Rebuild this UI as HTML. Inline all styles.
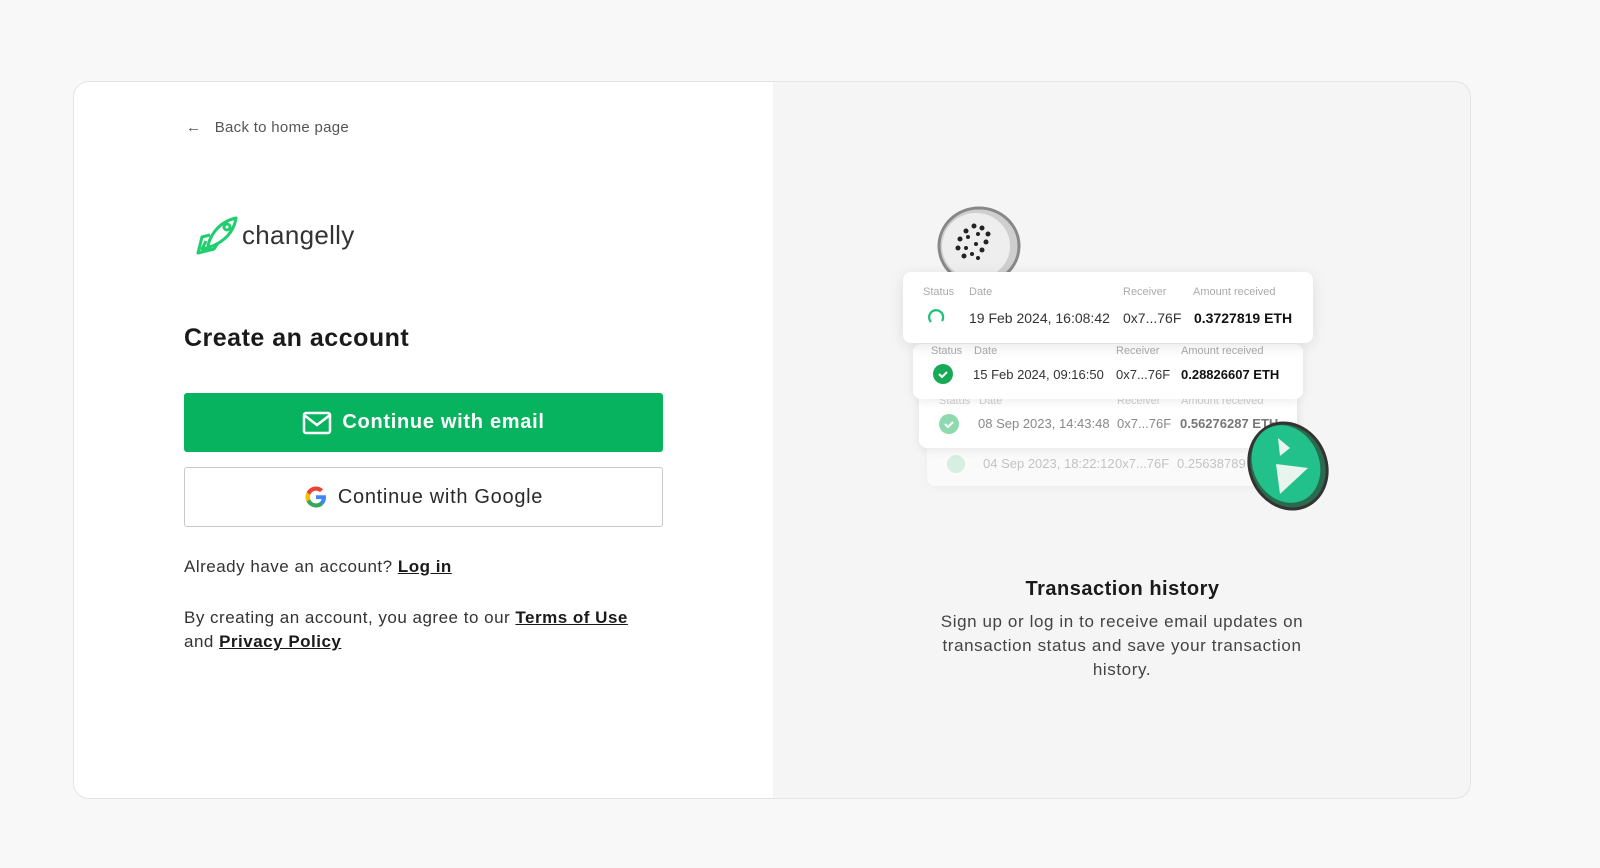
<!DOCTYPE html>
<html><head><meta charset="utf-8">
<style>
*{margin:0;padding:0;box-sizing:border-box}
body{width:1600px;height:868px;background:#f8f8f8;font-family:"Liberation Sans",sans-serif;color:#1f1f1f;position:relative;overflow:hidden;letter-spacing:.3px}
.card{position:absolute;left:73px;top:81px;width:1398px;height:718px;border:1px solid #e3e3e3;border-radius:16px;background:#f5f5f6;overflow:hidden}
.left{position:absolute;left:0;top:0;width:699px;height:100%;background:#fff}
.abs{position:absolute}
.back{left:112px;top:37px;font-size:15px;color:#555}
.h1{left:110px;top:242px;font-size:25px;font-weight:bold;color:#1a1a1a;letter-spacing:.5px}
.btn{position:absolute;left:110px;width:479px;height:59px;border-radius:3px;display:flex;align-items:center;justify-content:center;font-size:20px;gap:10px;letter-spacing:.7px}
.email{top:311px;background:#08b35f;color:#fff;font-weight:bold}
.google{top:385px;background:#fff;border:1px solid #c9c9c9;color:#2a2a2a;height:60px}
.txt{font-size:17px;color:#333;line-height:24px;letter-spacing:.5px}
.txt a{color:#1a1a1a;font-weight:bold;text-decoration:underline}
.row{position:absolute;background:#fff;border-radius:8px;box-shadow:0 2px 10px rgba(0,0,0,.08);letter-spacing:0}
.row .l{position:absolute;font-size:11px;color:#aaa}
.row .v{position:absolute;font-size:13px;color:#333}
.row .b{font-weight:bold;color:#111}
</style></head><body>
<div class="card">
 <div class="left">
  <div class="abs back">&#8592;&nbsp;&nbsp; Back to home page</div>
  <svg class="abs" style="left:122px;top:133px" width="44" height="42" viewBox="0 0 44 42" fill="none" stroke="#1fce6f" stroke-width="3" stroke-linejoin="round"><path d="M12 30 C16 16 26 6 40 3 C38 17 28 27 14 32 Z"/><circle cx="31" cy="12" r="3"/><path d="M14 20 L6 22 L2 38 L18 34 L22 28"/><path d="M10 26 L6 34 L14 32"/></svg>
  <div class="abs" style="left:168px;top:138px;font-size:26px;color:#333">changelly</div>
  <div class="abs h1">Create an account</div>
  <div class="btn email"><svg width="30" height="24" viewBox="0 0 30 24" fill="none" stroke="#fff" stroke-width="2.5"><rect x="2" y="2" width="26" height="20" rx="2"/><path d="M2 4 L15 14 L28 4"/></svg>Continue with email</div>
  <div class="btn google"><svg width="24" height="24" viewBox="0 0 24 24"><path d="M22 12.2c0-.7-.1-1.4-.2-2H12v3.9h5.6c-.3 1.3-1 2.4-2.1 3.1v2.6h3.4c2-1.8 3.1-4.5 3.1-7.6z" fill="#4285F4"/><path d="M12 22.5c2.8 0 5.2-.9 6.9-2.5l-3.4-2.6c-.9.6-2.100 1-3.5 1-2.700 0-5-1.800-5.800-4.300H2.7v2.7C4.4 20.2 8 22.5 12 22.5z" fill="#34A853"/><path d="M6.2 14.1c-.2-.6-.3-1.3-.3-2.1s.1-1.4.3-2.1V7.2H2.7C2 8.6 1.5 10.3 1.5 12s.4 3.4 1.2 4.8z" fill="#FBBC05"/><path d="M12 5.6c1.5 0 2.9.5 4 1.6l3-3C17.2 2.5 14.8 1.5 12 1.5 8 1.5 4.4 3.8 2.7 7.2l3.5 2.7C7 7.4 9.300 5.6 12 5.6z" fill="#EA4335"/></svg>Continue with Google</div>
  <div class="abs txt" style="left:110px;top:473px">Already have an account? <a>Log in</a></div>
  <div class="abs txt" style="left:110px;top:524px">By creating an account, you agree to our <a>Terms of Use</a><br>and <a>Privacy Policy</a></div>
 </div>
 <svg class="abs" style="left:862px;top:124px" width="86" height="70" viewBox="0 0 86 70"><ellipse cx="43" cy="40" rx="40" ry="38" fill="#cfcfcf" stroke="#888" stroke-width="3"/><ellipse cx="40" cy="40" rx="34" ry="33" fill="#eee"/><g fill="#222"><circle cx="30" cy="25" r="2.5"/><circle cx="38" cy="20" r="2.5"/><circle cx="46" cy="22" r="2.5"/><circle cx="52" cy="28" r="2.5"/><circle cx="24" cy="33" r="2.5"/><circle cx="32" cy="31" r="2"/><circle cx="42" cy="28" r="2"/><circle cx="50" cy="36" r="2.5"/><circle cx="22" cy="42" r="2.5"/><circle cx="30" cy="42" r="2"/><circle cx="40" cy="38" r="2"/><circle cx="46" cy="44" r="2.5"/><circle cx="28" cy="50" r="2.5"/><circle cx="36" cy="48" r="2"/><circle cx="42" cy="52" r="2"/></g></svg>
 <div class="row" style="left:853px;top:319px;width:370px;height:85px;opacity:.55">
  <div class="v" style="left:56px;top:55px;color:#999">04 Sep 2023, 18:22:12</div><div class="v" style="left:188px;top:55px;color:#999">0x7...76F</div><div class="v" style="left:250px;top:55px;color:#999">0.25638789</div>
  <svg class="abs" style="left:20px;top:54px" width="18" height="18"><circle cx="9" cy="9" r="9" fill="#bfe9d0"/></svg></div>
 <div class="row" style="left:845px;top:310px;width:378px;height:56px">
  <div class="l" style="left:20px;top:3px;color:#ccc">Status</div><div class="l" style="left:60px;top:3px;color:#ccc">Date</div><div class="l" style="left:198px;top:3px;color:#ccc">Receiver</div><div class="l" style="left:262px;top:3px;color:#ccc">Amount received</div>
  <svg class="abs" style="left:20px;top:22px" width="20" height="20"><circle cx="10" cy="10" r="10" fill="#8fd9ae"/><path d="M6 10l3 3 5-5" stroke="#fff" stroke-width="2" fill="none"/></svg>
  <div class="v" style="left:59px;top:24px;color:#888">08 Sep 2023, 14:43:48</div><div class="v" style="left:198px;top:24px;color:#888">0x7...76F</div><div class="v b" style="left:261px;top:24px;color:#777">0.56276287 ETH</div></div>
 <div class="row" style="left:839px;top:262px;width:390px;height:55px">
  <div class="l" style="left:18px;top:1px">Status</div><div class="l" style="left:61px;top:1px">Date</div><div class="l" style="left:203px;top:1px">Receiver</div><div class="l" style="left:268px;top:1px">Amount received</div>
  <svg class="abs" style="left:20px;top:20px" width="20" height="20"><circle cx="10" cy="10" r="10" fill="#18a957"/><path d="M6 10l3 3 5-5" stroke="#fff" stroke-width="2" fill="none"/></svg>
  <div class="v" style="left:60px;top:23px">15 Feb 2024, 09:16:50</div><div class="v" style="left:203px;top:23px">0x7...76F</div><div class="v b" style="left:268px;top:23px">0.28826607 ETH</div></div>
 <div class="row" style="left:829px;top:190px;width:410px;height:71px;box-shadow:0 3px 14px rgba(0,0,0,.1)">
  <div class="l" style="left:20px;top:14px">Status</div><div class="l" style="left:66px;top:14px">Date</div><div class="l" style="left:220px;top:14px">Receiver</div><div class="l" style="left:290px;top:14px">Amount received</div>
  <svg class="abs" style="left:24px;top:36px" width="18" height="18" fill="none" stroke="#1fc178" stroke-width="2.2"><path d="M4 14 A7 7 0 1 1 15 13"/></svg>
  <div class="v" style="left:66px;top:38px;font-size:14px">19 Feb 2024, 16:08:42</div><div class="v" style="left:220px;top:38px;font-size:14px">0x7...76F</div><div class="v b" style="left:291px;top:38px;font-size:14px">0.3727819 ETH</div></div>
 <svg class="abs" style="left:1168px;top:336px" width="90" height="96" viewBox="0 0 90 96"><ellipse cx="46" cy="48" rx="38" ry="44" transform="rotate(-25 46 48)" fill="#2a6a4e" stroke="#333" stroke-width="3"/><ellipse cx="44" cy="46" rx="33" ry="40" transform="rotate(-25 44 46)" fill="#22c08a"/><path d="M36 20 L48 30 L38 38 Z M34 46 L66 50 L38 76 Z" fill="#e8f5ee"/></svg>
 <div class="abs" style="left:699px;top:496px;width:699px;text-align:center;font-size:20px;font-weight:bold;color:#1a1a1a;letter-spacing:.5px">Transaction history</div>
 <div class="abs" style="left:855px;top:528px;width:386px;text-align:center;font-size:17px;line-height:24px;color:#444;letter-spacing:.6px">Sign up or log in to receive email updates on transaction status and save your transaction history.</div>
</div>
</body></html>
